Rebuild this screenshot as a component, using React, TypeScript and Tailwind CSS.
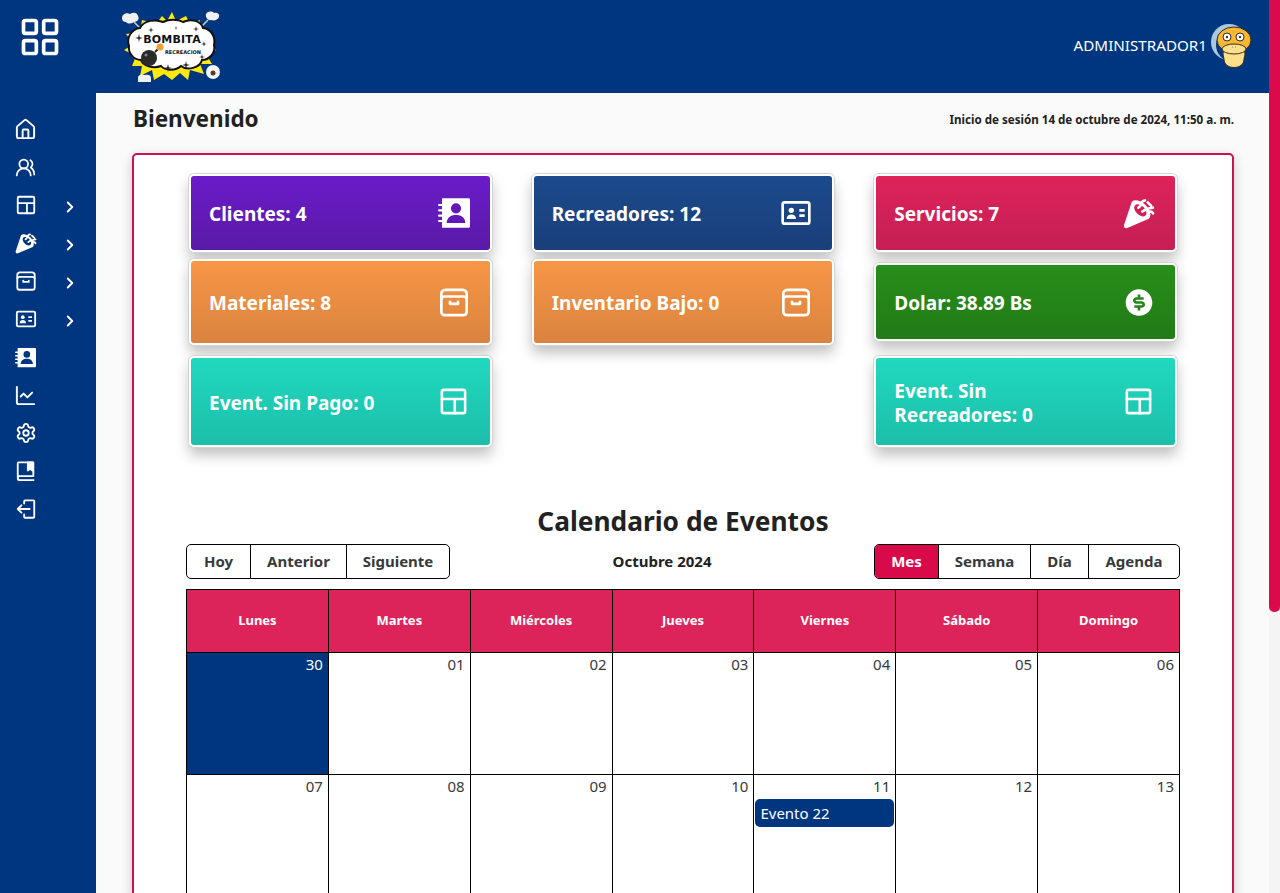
import React from "react";
import {
  ChartLine,
  ChevronRight,
  House,
  LayoutGrid,
  Settings,
  UsersRound,
} from "lucide-react";
import { RiMoneyDollarCircleFill } from "react-icons/ri";

function LayoutIcon({ size = 24 }: { size?: number }) {
  return (
    <svg width={size} height={size} viewBox="0 0 24 24" fill="none" stroke="currentColor" strokeWidth={2} strokeLinecap="round" strokeLinejoin="round">
      <rect x="3" y="3" width="18" height="18" rx="1.5" />
      <path d="M3 10h18M13 10v11" />
    </svg>
  );
}

function ArchiveIcon({ size = 24 }: { size?: number }) {
  return (
    <svg width={size} height={size} viewBox="0 0 24 24" fill="none" stroke="currentColor" strokeWidth={2} strokeLinecap="round" strokeLinejoin="round">
      <path d="M2.5 9V5.5C2.5 3.8 3.8 2.5 5.5 2.5h13c1.7 0 3 1.3 3 3V9" />
      <rect x="2.5" y="7.5" width="19" height="14" rx="2.5" />
      <path d="M9 11.5V13h6v-1.5" />
    </svg>
  );
}

function IdCardIcon({ size = 24 }: { size?: number }) {
  return (
    <svg width={size} height={size} viewBox="0 0 24 24" fill="none">
      <rect x="2" y="4" width="20" height="16" rx="1.5" stroke="currentColor" strokeWidth="2" />
      <circle cx="8.5" cy="10" r="2" fill="currentColor" />
      <path d="M5 16.5c0-2.2 1.5-3.3 3.5-3.3s3.5 1.1 3.5 3.3z" fill="currentColor" />
      <path d="M14.5 10h4M14.5 14h4" stroke="currentColor" strokeWidth="2" />
    </svg>
  );
}

function AddressBookIcon({ size = 24, cut }: { size?: number; cut: string }) {
  return (
    <svg width={size} height={size} viewBox="0 0 24 24" className={cut}>
      <path d="M3 1h20a1 1 0 0 1 1 1v20a1 1 0 0 1-1 1H3z" fill="white" />
      <path d="M0.8 6h3.5M0.8 10h3.5M0.8 14h3.5M0.8 18h3.5" stroke="white" strokeWidth="1.6" strokeLinecap="round" />
      <circle cx="13.5" cy="8.5" r="3.8" fill="currentColor" />
      <path d="M6.5 19.5c.2-4 3-6 7-6s6.800 2 7 6z" fill="currentColor" />
    </svg>
  );
}

function PartyIcon({ size = 24 }: { size?: number }) {
  return (
    <svg width={size} height={size} viewBox="0 0 24 24" fill="currentColor">
      <path
        fillRule="evenodd"
        d="M3.2 23.2C1.2 23.800.3 22.500.8 20.800L6.600 3.600A9 5.500 45 0 1 19.400 16.400ZM9.100 6.100A5.500 3.400 45 1 0 16.900 13.900A5.500 3.400 45 1 0 9.100 6.100Z"
      />
      <path
        d="M11.500 8c2.500-.8 1.500-3 3-4.500.8-.8 1.500-1 2-1M14.500 11c2-2 4.500-2.500 8-3M18.500 4l2.500 2.500M19.500 11c1.200-.3 2.300 0 3 1.200"
        fill="none"
        stroke="currentColor"
        strokeWidth="2"
        strokeLinecap="round"
      />
    </svg>
  );
}

function BookIcon({ size = 24 }: { size?: number }) {
  return (
    <svg width={size} height={size} viewBox="0 0 24 24" fill="none" stroke="currentColor" strokeWidth={2} strokeLinejoin="round">
      <path d="M3 19V3.500C3 2.900 3.500 2.500 4 2.500h16v15H5.500A2.500 2.500 0 0 0 3 19.500C3 20.900 4.100 22 5.500 22H21" />
      <path d="M14 2.500h5v9l-2.500-2-2.500 2z" fill="currentColor" />
    </svg>
  );
}

function ExitIcon({ size = 24 }: { size?: number }) {
  return (
    <svg width={size} height={size} viewBox="0 0 24 24" fill="none" stroke="currentColor" strokeWidth={2} strokeLinecap="round" strokeLinejoin="round">
      <path d="M10 6V3.500c0-.6.400-1 1-1h9c.6 0 1 .4 1 1v17c0 .6-.4 1-1 1h-9c-.6 0-1-.4-1-1V18" />
      <path d="M16 12H3M7 8l-4 4 4 4" />
    </svg>
  );
}

function Sparkle({ x, y, r = 4 }: { x: number; y: number; r?: number }) {
  const k = r * 0.18;
  return (
    <path
      d={`M${x} ${y - r}L${x + k} ${y - k}L${x + r} ${y}L${x + k} ${y + k}L${x} ${y + r}L${x - k} ${y + k}L${x - r} ${y}L${x - k} ${y - k}Z`}
      fill="#1a1a1a"
    />
  );
}

function Logo() {
  return (
    <svg width="104" height="72" viewBox="0 0 104 72">
      <path d="M14 12 26 24M88 10 76 22" stroke="#c9ccd4" strokeWidth="1.5" />
      <polygon
        points="52,2 56,11 66,6 70,14 80,10 78,20 92,24 84,32 96,40 86,44 92,54 80,54 84,64 70,60 68,70 60,63 52,70 44,64 34,70 32,60 20,66 22,56 12,56 16,46 4,40 14,34 6,24 20,22 22,10 36,14 42,6 47,11"
        fill="#fde910"
      />
      <path
        d="M20 18c4-8 16-9 23-6 6-3 15-3 20 0 8-4 18-1 20 6 8 1 13 9 11 17 2 8-5 15-12 15-2 8-15 11-21 6-5 5-16 5-20 0-8 3-18 0-20-6-8 0-13-8-12-14-3-9 3-17 11-18z"
        fill="white"
        stroke="#111"
        strokeWidth="2"
      />
      <Sparkle x={19} y={28} />
      <Sparkle x={31} y={20} r={3} />
      <Sparkle x={76} y={19} r={3} />
      <Sparkle x={66} y={55} r={4} />
      <Sparkle x={48} y={58} r={4} />
      <Sparkle x={84} y={34} r={3} />
      <Sparkle x={82} y={47} r={3} />
      <Sparkle x={56} y={18} r={2} />
      <text x="52" y="33" textAnchor="middle" fontSize="11" fontWeight="900" fill="#111" fontFamily="'DejaVu Sans', sans-serif" letterSpacing="0.2">BOMBITA</text>
      <text x="63" y="44" textAnchor="middle" fontSize="5" fontWeight="900" fill="#111" fontFamily="'DejaVu Sans', sans-serif">RECREACION</text>
      <circle cx="29" cy="48" r="8" fill="#2a2a2a" />
      <circle cx="26" cy="45" r="1.5" fill="#888" />
      <path d="M35 42 39 38" stroke="#222" strokeWidth="2" />
      <circle cx="40" cy="37" r="3.5" fill="#f59e2e" />
      <path d="M2 8c0-4 5-6 8-4 3-2 7-2 8 2 2 3-1 6-4 6-3 2-6 2-8 0-3 0-4-2-4-4z" fill="#eef0f4" />
      <path d="M86 4c2-3 6-3 8-1 3-1 6 1 5 4-1 3-5 4-8 3-3 1-6-3-5-6z" fill="#eef0f4" />
      <circle cx="93" cy="62" r="7" fill="#f4f4f4" />
      <circle cx="93" cy="63" r="2.5" fill="#5a3a2a" />
      <path d="M18 67c1-3 5-3 7-2 3-1 6 0 6 3v4H18z" fill="#eef0f4" />
    </svg>
  );
}

function Avatar() {
  return (
    <svg width="44" height="48" viewBox="0 0 44 48">
      <circle cx="19" cy="19" r="18" fill="#a9c8dc" />
      <circle cx="23" cy="22" r="17" fill="#00367f" />
      <ellipse cx="24" cy="17" rx="17" ry="13" fill="#f7b733" stroke="#3a2c1a" strokeWidth="1" />
      <path d="M13 31c0-3 3-6 6-7h10c3 1 6 4 6 7l-1 5c0 5-4 8.500-10 8.500s-10-3.500-10-8.500z" fill="#fde08c" stroke="#3a2c1a" strokeWidth="1" />
      <ellipse cx="24" cy="26" rx="12" ry="5" fill="#fde08c" stroke="#3a2c1a" strokeWidth="1" />
      <circle cx="17" cy="14" r="4" fill="white" stroke="#3a2c1a" strokeWidth="1" />
      <circle cx="30" cy="14" r="4" fill="white" stroke="#3a2c1a" strokeWidth="1" />
      <circle cx="17" cy="14" r="1.2" fill="#333" />
      <circle cx="30" cy="14" r="1.2" fill="#333" />
      <path d="M22 24h.5M25.500 24h.5" stroke="#3a2c1a" strokeWidth="1" />
    </svg>
  );
}

const sideItems = [
  { icon: <House size={23} strokeWidth={2} />, arrow: false },
  { icon: <UsersRound size={21} strokeWidth={2} />, arrow: false },
  { icon: <LayoutIcon size={22} />, arrow: true },
  { icon: <PartyIcon size={22} />, arrow: true },
  { icon: <ArchiveIcon size={22} />, arrow: true },
  { icon: <IdCardIcon size={22} />, arrow: true },
  { icon: <AddressBookIcon size={21} cut="text-[#00367f]" />, arrow: false },
  { icon: <ChartLine size={23} strokeWidth={2} />, arrow: false },
  { icon: <Settings size={22} strokeWidth={2} />, arrow: false },
  { icon: <BookIcon size={22} />, arrow: false },
  { icon: <ExitIcon size={22} />, arrow: false },
];

function StatCard({ label, icon, className }: { label: React.ReactNode; icon: React.ReactNode; className: string }) {
  return (
    <div className={`flex items-center justify-between rounded-[5px] border-2 border-white px-[18px] text-white shadow-[0_0_0_1px_#d4d4d4,0_8px_14px_rgba(0,0,0,0.25)] ${className}`}>
      <span className="pt-[2px] text-[19px] font-bold leading-6">{label}</span>
      <span className="mr-[2px] flex w-[32px] justify-center">{icon}</span>
    </div>
  );
}

const days = ["Lunes", "Martes", "Miércoles", "Jueves", "Viernes", "Sábado", "Domingo"];
const rows = [
  ["30", "01", "02", "03", "04", "05", "06"],
  ["07", "08", "09", "10", "11", "12", "13"],
];

function ToolButton({ label, active, className = "" }: { label: string; active?: boolean; className?: string }) {
  return (
    <button className={`h-full text-[15px] font-bold ${active ? "bg-[#d80a49] text-white" : "text-[#373a3c]"} ${className}`}>
      {label}
    </button>
  );
}

export default function App() {
  return (
    <div className="flex h-[893px] overflow-hidden bg-white font-['Noto_Sans',sans-serif] text-[#212121]">
      <aside className="w-[96px] shrink-0 bg-[#00367f] text-white">
        <div className="flex h-[74px] items-center justify-center pr-[16px]">
          <LayoutGrid size={44} strokeWidth={2} />
        </div>
        <nav className="mt-[36px] flex flex-col pl-[14px]">
          {sideItems.map((item, i) => (
            <div key={i} className="flex h-[38px] items-center">
              <span className="flex w-[23px] justify-center">{item.icon}</span>
              {item.arrow && <ChevronRight size={18} strokeWidth={2.5} className="ml-[24px] mt-[4px]" />}
            </div>
          ))}
        </nav>
      </aside>

      <div className="flex min-w-0 flex-1 flex-col">
        <header className="flex h-[93px] shrink-0 items-center justify-between bg-[#00367f] pl-[24px] pr-[15px] text-white">
          <div className="mb-[2px]">
            <Logo />
          </div>
          <div className="flex items-center gap-[3px]">
            <span className="mb-[3px] text-[15.2px]">ADMINISTRADOR1</span>
            <Avatar />
          </div>
        </header>

        <main className="flex-1 bg-[#fafafa] pl-[36px] pr-[35px]">
          <div className="flex h-[60px] items-start justify-between">
            <h1 className="ml-[1px] mt-[9px] text-[22.5px] font-bold leading-[34px]">Bienvenido</h1>
            <p className="mt-[19px] text-[11.6px] font-bold leading-4">Inicio de sesión 14 de octubre de 2024, 11:50 a. m.</p>
          </div>

          <section className="rounded-[5px] border-2 border-[#cf1050] bg-white px-[52px] pt-[19px] shadow-[0_4px_12px_rgba(0,0,0,0.2)]">
            <div className="mx-[3px] grid grid-cols-3 items-center gap-x-[40px] gap-y-[11px]">
              <div className="col-span-3 -mb-[4px] grid grid-cols-3 gap-x-[40px]">
                <StatCard className="h-[78px] bg-gradient-to-b from-[#6a1bc9] to-[#5a1aa7]" label="Clientes: 4" icon={<AddressBookIcon size={32} cut="text-[#6019b8]" />} />
                <StatCard className="h-[78px] bg-gradient-to-b from-[#1c4a8c] to-[#1a3f7a]" label="Recreadores: 12" icon={<IdCardIcon size={32} />} />
                <StatCard className="h-[78px] bg-gradient-to-b from-[#de235a] to-[#c41f55]" label="Servicios: 7" icon={<PartyIcon size={32} />} />
              </div>
              <StatCard className="h-[86px] bg-gradient-to-b from-[#f79646] to-[#da833f]" label="Materiales: 8" icon={<ArchiveIcon size={33} />} />
              <StatCard className="h-[86px] bg-gradient-to-b from-[#f79646] to-[#da833f]" label="Inventario Bajo: 0" icon={<ArchiveIcon size={33} />} />
              <StatCard className="h-[78px] bg-gradient-to-b from-[#278e1a] to-[#227b17]" label="Dolar: 38.89 Bs" icon={<RiMoneyDollarCircleFill size={37} />} />
              <StatCard className="h-[91px] bg-gradient-to-b from-[#20d9be] to-[#1cbeaa]" label="Event. Sin Pago: 0" icon={<LayoutIcon size={31} />} />
              <div />
              <StatCard className="h-[91px] bg-gradient-to-b from-[#20d9be] to-[#1cbeaa]" label={<>Event. Sin<br />Recreadores: 0</>} icon={<LayoutIcon size={31} />} />
            </div>

            <h2 className="mt-[55px] text-center text-[26.3px] font-bold leading-[38px]">Calendario de Eventos</h2>

            <div className="mt-[4px] flex h-[35px] items-center justify-between">
              <div className="flex h-full divide-x divide-black rounded-[5px] border border-black">
                <ToolButton label="Hoy" className="w-[64px]" />
                <ToolButton label="Anterior" className="w-[96px]" />
                <ToolButton label="Siguiente" className="w-[102px]" />
              </div>
              <span className="text-[15px] font-bold">Octubre 2024</span>
              <div className="flex h-full overflow-hidden rounded-[5px] border border-black">
                <ToolButton label="Mes" active className="w-[63px]" />
                <ToolButton label="Semana" className="w-[92px] border-l border-black" />
                <ToolButton label="Día" className="w-[58px] border-l border-black" />
                <ToolButton label="Agenda" className="w-[91px] border-l border-black" />
              </div>
            </div>

            <div className="mt-[10px] border-l border-t border-black">
              <div className="grid h-[63px] grid-cols-7">
                {days.map((d) => (
                  <div key={d} className="flex items-center justify-center border-b border-r border-black bg-[#dd245a] text-[13px] font-bold text-white">
                    {d}
                  </div>
                ))}
              </div>
              {rows.map((row, r) => (
                <div key={r} className="grid h-[122px] grid-cols-7">
                  {row.map((n) => (
                    <div key={n} className={`border-b border-r border-black px-[5px] ${n === "30" ? "bg-[#00367f] text-white" : "text-[#373a3c]"}`}>
                      <div className="text-right text-[15px] leading-[22px]">{n}</div>
                      {n === "11" && (
                        <div className="-mx-[4px] mt-[2px] rounded-[5px] bg-[#00367f] px-[5px] text-[15px] leading-[28px] text-white">Evento 22</div>
                      )}
                    </div>
                  ))}
                </div>
              ))}
            </div>
          </section>
        </main>
      </div>

      <div className="w-[11px] shrink-0 bg-[#f4f4f4]">
        <div className="h-[612px] rounded-b-[5px] bg-[#dc0a4b]" />
      </div>
    </div>
  );
}
